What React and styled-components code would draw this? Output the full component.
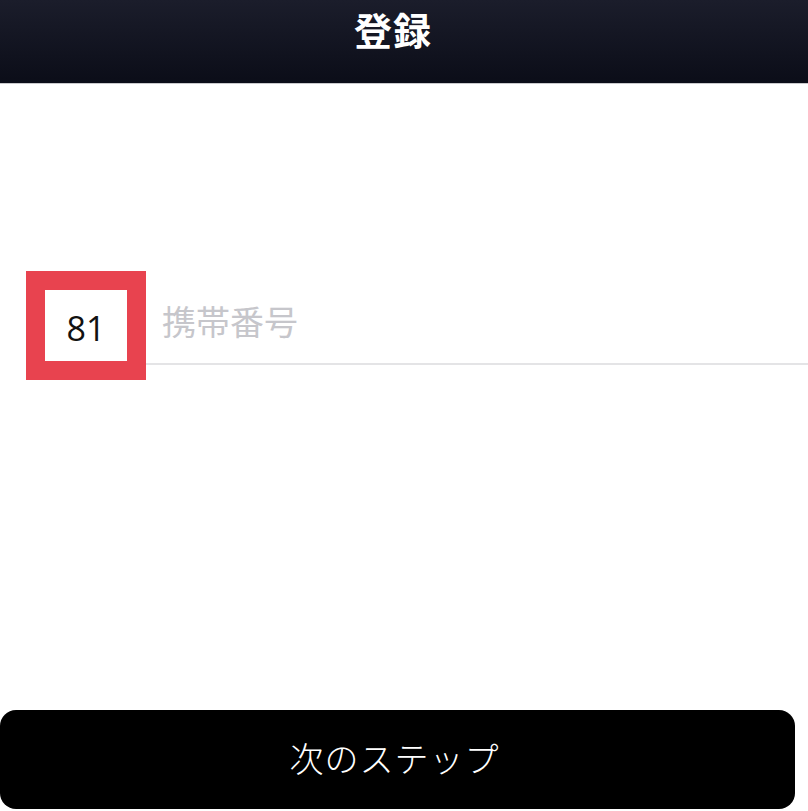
import React from 'react';
import styled, { createGlobalStyle } from 'styled-components';

const GlobalStyle = createGlobalStyle`
  html, body {
    margin: 0;
    padding: 0;
    background: #ffffff;
  }
  body {
    font-family: 'Noto Sans CJK JP', 'Noto Sans', sans-serif;
  }
`;

const Page = styled.div`
  width: 808px;
  height: 811px;
  display: flex;
  flex-direction: column;
  overflow: hidden;
  background: #fff;
`;

const Header = styled.header`
  height: 83px;
  flex-shrink: 0;
  display: flex;
  justify-content: center;
  align-items: flex-start;
  padding-right: 22px;
  background: linear-gradient(180deg, #1b1d2b 0%, #0b0d18 100%);
  border-bottom: 1px solid #c9c9cc;
`;

const Title = styled.h1`
  margin: 0;
  padding-top: 2px;
  color: #ffffff;
  font-size: 38px;
  font-weight: 700;
  line-height: 54px;
  letter-spacing: 1px;
`;

const Body = styled.main`
  flex: 1;
  display: flex;
  flex-direction: column;
  justify-content: space-between;
  padding-top: 187px;
`;

const PhoneRow = styled.div`
  display: flex;
  align-items: stretch;
  padding-left: 26px;
`;

const CodeBox = styled.div`
  width: 82px;
  height: 71px;
  border: 19px solid #e8434f;
  background: #fff;
  display: flex;
  align-items: center;
  justify-content: center;
  padding-top: 5px;
  box-sizing: content-box;
  height: 66px;
  font-family: 'Open Sans', sans-serif;
  font-size: 34px;
  color: #111;
  flex-shrink: 0;
`;

const Field = styled.div`
  flex: 1;
  display: flex;
  align-items: center;
  padding-left: 16px;
  padding-top: 6px;
  margin-bottom: 15px;
  border-bottom: 2px solid #e4e4e6;
  font-size: 34px;
  color: #c6c6cb;
`;

const NextButton = styled.button`
  width: 795px;
  height: 99px;
  margin-bottom: 2px;
  border: none;
  border-radius: 16px;
  background: #000;
  color: #fff;
  font-family: 'Noto Sans CJK JP', sans-serif;
  font-size: 34px;
  font-weight: 300;
  letter-spacing: 1px;
  padding: 0 6px 4px 0;
`;

export default function App() {
  return (
    <>
      <GlobalStyle />
      <Page>
        <Header>
          <Title>登録</Title>
        </Header>
        <Body>
          <PhoneRow>
            <CodeBox>81</CodeBox>
            <Field>携帯番号</Field>
          </PhoneRow>
          <NextButton>次のステップ</NextButton>
        </Body>
      </Page>
    </>
  );
}
